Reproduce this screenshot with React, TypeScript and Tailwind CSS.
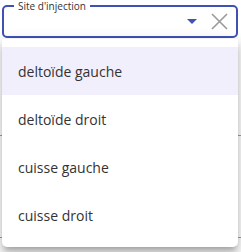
import React from "react";

const items = ["deltoïde gauche", "deltoïde droit", "cuisse gauche", "cuisse droit"];

export default function App() {
  return (
    <div
      className="relative w-[241px] h-[252px] bg-white overflow-hidden"
      style={{ fontFamily: '"Open Sans", "Noto Sans", sans-serif' }}
    >
      <div className="pt-[5px] px-[2px]">
        <div className="relative h-[33px] w-[236px] rounded-[5px] border-2 border-[#3f51b5] flex items-center justify-end pr-[8px]">
          <span className="absolute -top-[7px] left-[10px] px-[4px] bg-white text-[10px] leading-[12px] text-[#333]">
            Site d'injection
          </span>
          <svg width="10" height="6" viewBox="0 0 10 6" className="mr-[14px] mt-[1px]">
            <path d="M0 0 L10 0 L5 5 Z" fill="#3f51b5" />
          </svg>
          <svg width="17" height="17" viewBox="0 0 17 17">
            <path d="M1 1 L16 16 M16 1 L1 16" stroke="#9a9a9a" strokeWidth="1.6" />
          </svg>
        </div>
      </div>
      <div className="mt-[97px] h-[1px] bg-[#9e9e9e]" />
      <div className="mt-[101px] h-[1px] bg-[#9e9e9e]" />
      <div className="absolute top-[39px] left-[2px] w-[236px] bg-white rounded-b-[5px] py-[8px] shadow-[0_5px_5px_-3px_rgba(0,0,0,0.2),0_8px_10px_1px_rgba(0,0,0,0.14),0_3px_14px_2px_rgba(0,0,0,0.12)]">
        {items.map((t, i) => (
          <div
            key={t}
            className={`h-[48px] flex items-center pl-[16px] text-[14px] text-[#333] ${i === 0 ? "bg-[#f1effb]" : ""}`}
          >
            {t}
          </div>
        ))}
      </div>
    </div>
  );
}
